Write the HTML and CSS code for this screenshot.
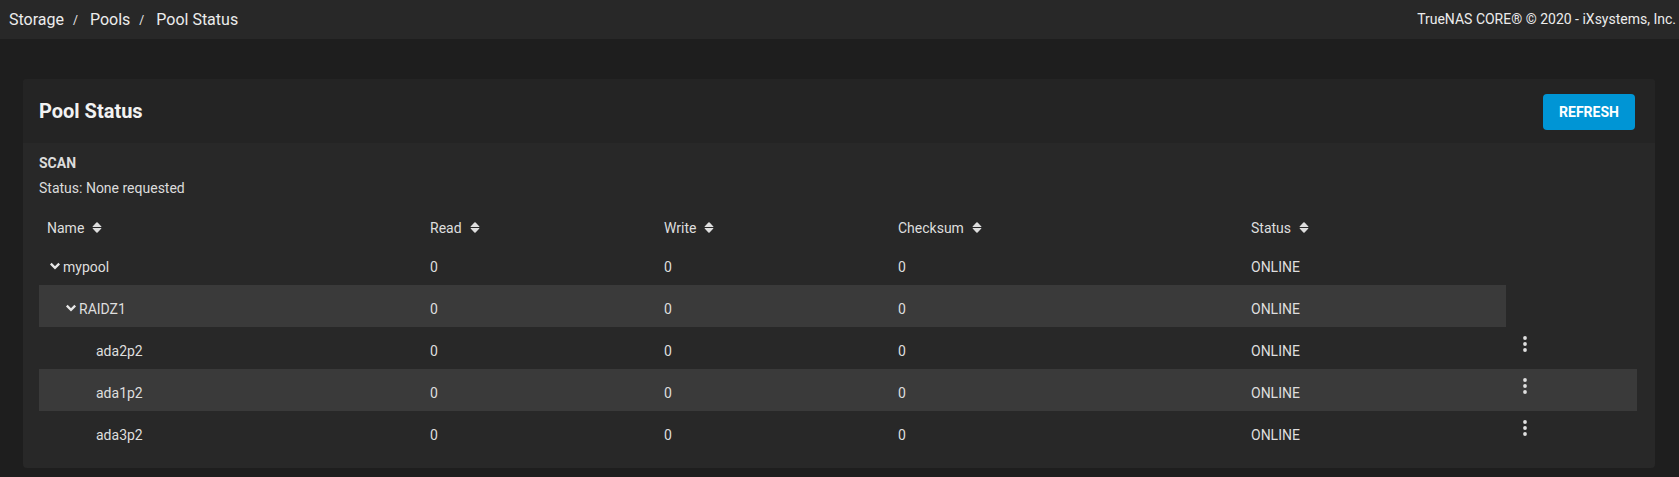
FILE: index.html
```html
<!DOCTYPE html>
<html lang="en">
<head>
<meta charset="utf-8">
<title>Pool Status</title>
<link rel="stylesheet" href="styles.css">
</head>
<body>
<header class="topbar">
  <nav class="crumbs">
    <span class="crumb">Storage</span><span class="sep">/</span><span class="crumb">Pools</span><span class="sep">/</span><span class="crumb">Pool Status</span>
  </nav>
  <div class="copyright">TrueNAS CORE® © 2020 - iXsystems, Inc.</div>
</header>

<main class="page">
  <section class="card">
    <div class="card-header">
      <h1 class="card-title">Pool Status</h1>
      <button class="btn-refresh">REFRESH</button>
    </div>
    <div class="card-body">
      <div class="scan-title">SCAN</div>
      <div class="scan-status">Status: None requested</div>

      <div class="table">
        <div class="row head">
          <div class="cell">Name<svg class="sort" viewBox="0 0 10 11" width="10" height="11"><path d="M0.6 4.6 L4.4 0.6 Q5 0 5.6 0.6 L9.4 4.6 Q9.8 5 9.2 5 L0.8 5 Q0.2 5 0.6 4.6Z M0.6 6.4 L4.4 10.4 Q5 11 5.6 10.4 L9.4 6.4 Q9.8 6 9.2 6 L0.8 6 Q0.2 6 0.6 6.4Z"/></svg></div>
          <div class="cell">Read<svg class="sort" viewBox="0 0 10 11" width="10" height="11"><path d="M0.6 4.6 L4.4 0.6 Q5 0 5.6 0.6 L9.4 4.6 Q9.8 5 9.2 5 L0.8 5 Q0.2 5 0.6 4.6Z M0.6 6.4 L4.4 10.4 Q5 11 5.6 10.4 L9.4 6.4 Q9.8 6 9.2 6 L0.8 6 Q0.2 6 0.6 6.4Z"/></svg></div>
          <div class="cell">Write<svg class="sort" viewBox="0 0 10 11" width="10" height="11"><path d="M0.6 4.6 L4.4 0.6 Q5 0 5.6 0.6 L9.4 4.6 Q9.8 5 9.2 5 L0.8 5 Q0.2 5 0.6 4.6Z M0.6 6.4 L4.4 10.4 Q5 11 5.6 10.4 L9.4 6.4 Q9.8 6 9.2 6 L0.8 6 Q0.2 6 0.6 6.4Z"/></svg></div>
          <div class="cell">Checksum<svg class="sort" viewBox="0 0 10 11" width="10" height="11"><path d="M0.6 4.6 L4.4 0.6 Q5 0 5.6 0.6 L9.4 4.6 Q9.8 5 9.2 5 L0.8 5 Q0.2 5 0.6 4.6Z M0.6 6.4 L4.4 10.4 Q5 11 5.6 10.4 L9.4 6.4 Q9.8 6 9.2 6 L0.8 6 Q0.2 6 0.6 6.4Z"/></svg></div>
          <div class="cell">Status<svg class="sort" viewBox="0 0 10 11" width="10" height="11"><path d="M0.6 4.6 L4.4 0.6 Q5 0 5.6 0.6 L9.4 4.6 Q9.8 5 9.2 5 L0.8 5 Q0.2 5 0.6 4.6Z M0.6 6.4 L4.4 10.4 Q5 11 5.6 10.4 L9.4 6.4 Q9.8 6 9.2 6 L0.8 6 Q0.2 6 0.6 6.4Z"/></svg></div>
        </div>

        <div class="row">
          <div class="cell name lvl0"><svg class="toggle" viewBox="0 0 12 8" width="12" height="8"><polyline points="1.8,1.6 6,5.8 10.2,1.6"/></svg>mypool</div>
          <div class="cell">0</div>
          <div class="cell">0</div>
          <div class="cell">0</div>
          <div class="cell">ONLINE</div>
        </div>

        <div class="row alt">
          <div class="cell name lvl1"><svg class="toggle" viewBox="0 0 12 8" width="12" height="8"><polyline points="1.8,1.6 6,5.8 10.2,1.6"/></svg>RAIDZ1</div>
          <div class="cell">0</div>
          <div class="cell">0</div>
          <div class="cell">0</div>
          <div class="cell">ONLINE</div>
        </div>

        <div class="row">
          <div class="cell name lvl2"><span class="leaf"></span>ada2p2</div>
          <div class="cell">0</div>
          <div class="cell">0</div>
          <div class="cell">0</div>
          <div class="cell">ONLINE</div>
          <div class="cell actions"><svg class="kebab" viewBox="0 0 24 24" width="24" height="24"><circle cx="12" cy="6" r="1.9"/><circle cx="12" cy="12" r="1.9"/><circle cx="12" cy="18" r="1.9"/></svg></div>
        </div>

        <div class="row alt">
          <div class="cell name lvl2"><span class="leaf"></span>ada1p2</div>
          <div class="cell">0</div>
          <div class="cell">0</div>
          <div class="cell">0</div>
          <div class="cell">ONLINE</div>
          <div class="cell actions"><svg class="kebab" viewBox="0 0 24 24" width="24" height="24"><circle cx="12" cy="6" r="1.9"/><circle cx="12" cy="12" r="1.9"/><circle cx="12" cy="18" r="1.9"/></svg></div>
        </div>

        <div class="row">
          <div class="cell name lvl2"><span class="leaf"></span>ada3p2</div>
          <div class="cell">0</div>
          <div class="cell">0</div>
          <div class="cell">0</div>
          <div class="cell">ONLINE</div>
          <div class="cell actions"><svg class="kebab" viewBox="0 0 24 24" width="24" height="24"><circle cx="12" cy="6" r="1.9"/><circle cx="12" cy="12" r="1.9"/><circle cx="12" cy="18" r="1.9"/></svg></div>
        </div>
      </div>
    </div>
  </section>
</main>
</body>
</html>
```

FILE: styles.css
```css
* { box-sizing: border-box; }

html, body {
  margin: 0;
  padding: 0;
  background: #1e1e1e;
  font-family: Roboto, "Liberation Sans", Arial, sans-serif;
  color: #e0e0e0;
}

.topbar {
  height: 39px;
  background: #282828;
  display: flex;
  align-items: center;
  justify-content: space-between;
  padding: 0 3px 1px 9px;
}

.crumbs {
  display: flex;
  align-items: center;
  font-size: 16px;
  color: #ececec;
}

.sep {
  font-size: 12px;
  margin: 1px 12px 0 9px;
}

.copyright {
  font-size: 14px;
  color: #ececec;
  padding-bottom: 1px;
}

.page {
  padding: 40px 24px 0 23px;
}

.card {
  border-radius: 4px;
  overflow: hidden;
  background: #282828;
}

.card-header {
  height: 64px;
  background: #242424;
  display: flex;
  align-items: center;
  justify-content: space-between;
  padding: 0 20px 0 16px;
}

.card-title {
  margin: 0;
  font-size: 20px;
  font-weight: 700;
  color: #f2f2f2;
}

.btn-refresh {
  width: 92px;
  height: 36px;
  margin-top: 2px;
  border: none;
  border-radius: 4px;
  background: #0095d5;
  color: #ffffff;
  font-family: Roboto, "Liberation Sans", Arial, sans-serif;
  font-size: 14px;
  font-weight: 700;
  padding: 0;
}

.card-body {
  padding: 10px 18px 15px 16px;
}

.scan-title {
  font-size: 14px;
  font-weight: 700;
  line-height: 20px;
  color: #dcdcdc;
}

.scan-status {
  font-size: 14px;
  line-height: 20px;
  margin-top: 5px;
  color: #dcdcdc;
}

.table {
  margin-top: 3px;
}

.row {
  display: grid;
  grid-template-columns: 383px 234px 234px 353px 263px 131px;
  height: 42px;
}

.cell {
  display: flex;
  align-items: center;
  height: 42px;
  padding: 6px 8px 0;
  font-size: 14px;
  line-height: 36px;
  color: #dedede;
  white-space: nowrap;
}

.row.head .cell {
  padding-top: 12px;
  line-height: 30px;
}

.row.alt .cell {
  background: #3a3a3a;
}

.sort {
  fill: #dedede;
  margin-left: 8px;
  margin-top: -1px;
}

.toggle {
  fill: none;
  stroke: #e6e6e6;
  stroke-width: 2.3;
  stroke-linecap: butt;
  stroke-linejoin: miter;
  margin: -2px 2px 0 2px;
  flex: none;
}

.name.lvl1 { padding-left: 24px; }
.name.lvl2 { padding-left: 40px; }

.leaf {
  display: inline-block;
  width: 17px;
  flex: none;
}

.cell.actions {
  align-items: flex-start;
  padding: 4.5px 0 0 7px;
}

.kebab {
  fill: #e0e0e0;
  display: block;
}
```
